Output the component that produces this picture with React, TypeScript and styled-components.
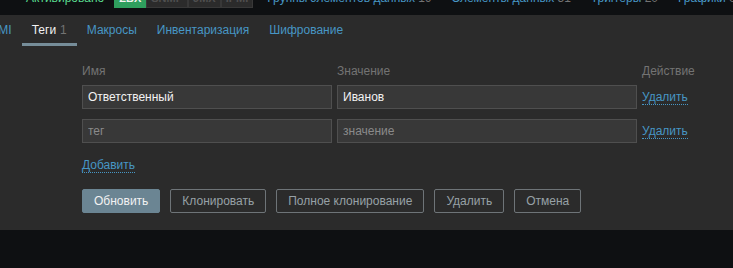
import React from "react";
import styled, { createGlobalStyle } from "styled-components";

const GlobalStyle = createGlobalStyle`
  html, body {
    margin: 0;
    padding: 0;
    background: #0e1012;
    font-family: "Liberation Sans", Arial, sans-serif;
    font-size: 12px;
  }
`;

const Page = styled.div`
  width: 733px;
  height: 268px;
  overflow: hidden;
  background: #0e1012;
`;

const TopBar = styled.div`
  height: 15px;
  overflow: hidden;
  background: #0e1012;
`;

const TopRow = styled.div`
  display: flex;
  align-items: center;
  height: 24px;
  margin-top: -14px;
  white-space: nowrap;
`;

const NavButton = styled.div`
  width: 10px;
  height: 24px;
  margin-left: -2px;
  background: #383838;
  border-radius: 2px;
`;

const Status = styled.span`
  color: #59db8f;
  margin-left: 28px;
`;

const Badges = styled.div`
  display: flex;
  margin-left: 10px;
  margin-right: 14px;
`;

const Badge = styled.span<{ $on?: boolean }>`
  padding: 1px 4px;
  line-height: 16px;
  font-weight: bold;
  font-size: 11px;
  color: ${(p) => (p.$on ? "#f2f2f2" : "#4f4f4f")};
  background: ${(p) => (p.$on ? "#2f9f5e" : "#2b2b2b")};
  border: 1px solid ${(p) => (p.$on ? "#2f9f5e" : "#383838")};
`;

const TopLink = styled.span`
  color: #4796c4;
  margin-right: 20px;
  & > em {
    font-style: normal;
    color: #737373;
  }
`;

const Tabs = styled.div`
  display: flex;
  height: 31px;
  margin-left: -23px;
  background: #2b2b2b;
`;

const Tab = styled.div<{ $active?: boolean }>`
  display: flex;
  align-items: center;
  padding: 2px 10px 0;
  box-sizing: border-box;
  color: ${(p) => (p.$active ? "#f2f2f2" : "#4796c4")};
  border-bottom: 3px solid ${(p) => (p.$active ? "#768d99" : "transparent")};
  & > em {
    font-style: normal;
    color: #737373;
    margin-left: 4px;
  }
`;

const Panel = styled.div`
  background: #2b2b2b;
  height: 184px;
  padding: 18px 0 0 82px;
  box-sizing: border-box;
`;

const TagGrid = styled.div`
  display: grid;
  grid-template-columns: 250px 300px auto;
  column-gap: 5px;
  row-gap: 10px;
  align-items: center;
`;

const HeadLabel = styled.div`
  color: #737373;
  line-height: 14px;
  margin-bottom: -3px;
`;

const Field = styled.input`
  height: 24px;
  box-sizing: border-box;
  background: #383838;
  border: 1px solid #4f4f4f;
  color: #f2f2f2;
  font-family: inherit;
  font-size: 12px;
  padding: 0 5px;
  outline: none;
  &::placeholder {
    color: #8a8a8a;
  }
`;

const LinkAction = styled.a`
  color: #4796c4;
  text-decoration: none;
  border-bottom: 1px dotted #4796c4;
  line-height: 14px;
  justify-self: start;
  cursor: pointer;
`;

const AddRow = styled.div`
  margin-top: 15px;
  line-height: 14px;
`;

const Buttons = styled.div`
  display: flex;
  gap: 10px;
  margin-top: 17px;
`;

const Button = styled.button<{ $primary?: boolean }>`
  height: 24px;
  padding: 0 11px;
  font-family: inherit;
  font-size: 12px;
  border-radius: 2px;
  cursor: pointer;
  color: ${(p) => (p.$primary ? "#f2f2f2" : "#97a1a6")};
  background: ${(p) => (p.$primary ? "#6b8593" : "transparent")};
  border: 1px solid ${(p) => (p.$primary ? "#6b8593" : "#6e7478")};
`;

const tags = [
  { name: "Ответственный", value: "Иванов" },
  { name: "", value: "" },
];

const App = () => {
  return (
    <Page>
      <GlobalStyle />
      <TopBar>
        <TopRow>
          <NavButton />
          <Status>Активировано</Status>
          <Badges>
            <Badge $on>ZBX</Badge>
            <Badge>SNMP</Badge>
            <Badge>JMX</Badge>
            <Badge>IPMI</Badge>
          </Badges>
          <TopLink>Группы элементов данных <em>19</em></TopLink>
          <TopLink>Элементы данных <em>51</em></TopLink>
          <TopLink>Триггеры <em>20</em></TopLink>
          <TopLink>Графики <em>0</em></TopLink>
        </TopRow>
      </TopBar>

      <Tabs>
        <Tab>IPMI</Tab>
        <Tab $active>Теги<em>1</em></Tab>
        <Tab>Макросы</Tab>
        <Tab>Инвентаризация</Tab>
        <Tab>Шифрование</Tab>
      </Tabs>

      <Panel>
        <TagGrid>
          <HeadLabel>Имя</HeadLabel>
          <HeadLabel>Значение</HeadLabel>
          <HeadLabel>Действие</HeadLabel>
          {tags.map((t, i) => (
            <React.Fragment key={i}>
              <Field defaultValue={t.name} placeholder="тег" />
              <Field defaultValue={t.value} placeholder="значение" />
              <LinkAction>Удалить</LinkAction>
            </React.Fragment>
          ))}
        </TagGrid>
        <AddRow>
          <LinkAction>Добавить</LinkAction>
        </AddRow>
        <Buttons>
          <Button $primary>Обновить</Button>
          <Button>Клонировать</Button>
          <Button>Полное клонирование</Button>
          <Button>Удалить</Button>
          <Button>Отмена</Button>
        </Buttons>
      </Panel>
    </Page>
  );
};

export default App;
